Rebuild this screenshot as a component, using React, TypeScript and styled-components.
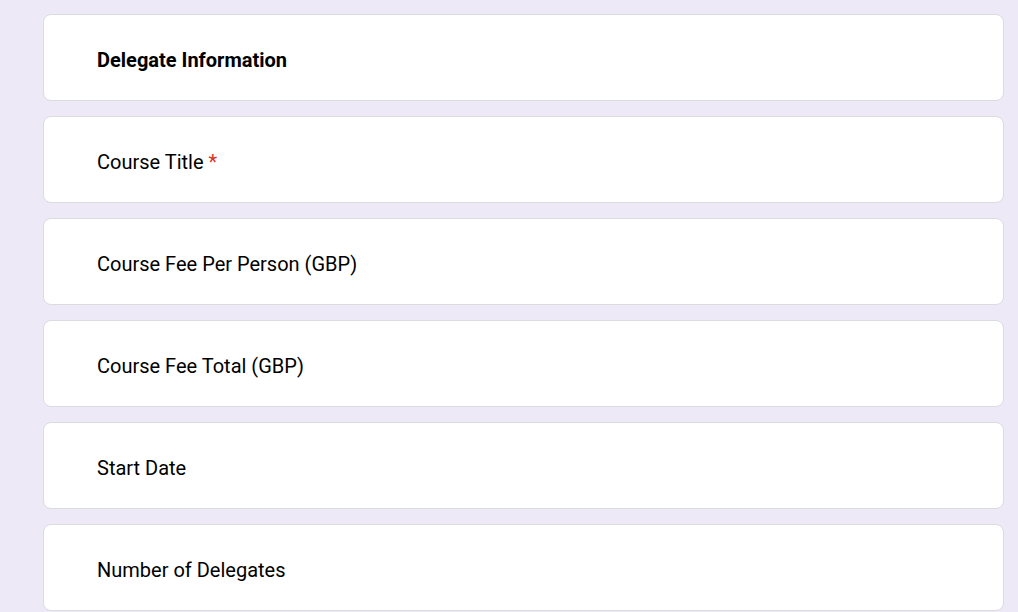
import React from "react";
import styled, { createGlobalStyle } from "styled-components";

const Global = createGlobalStyle`
  html, body { margin: 0; padding: 0; background: #ede9f7; }
  body { font-family: Roboto, "Noto Sans", Arial, sans-serif; }
`;

const Page = styled.div`
  display: flex;
  flex-direction: column;
  gap: 15px;
  padding: 14px 14px 0 43px;
`;

const Card = styled.div`
  box-sizing: border-box;
  height: 87px;
  background: #ffffff;
  border: 1px solid #dadce0;
  border-radius: 8px;
  display: flex;
  align-items: center;
  padding: 4px 24px 0 53px;
`;

const Title = styled.span<{ $bold?: boolean }>`
  font-size: 20px;
  line-height: 24px;
  color: #000;
  font-weight: ${(p) => (p.$bold ? 700 : 400)};
  letter-spacing: 0;
`;

const Req = styled.span`
  color: #d93025;
  margin-left: 5px;
`;

const items = [
  "Course Fee Per Person (GBP)",
  "Course Fee Total (GBP)",
  "Start Date",
  "Number of Delegates",
];

export default function App() {
  return (
    <>
      <Global />
      <Page>
        <Card>
          <Title $bold>Delegate Information</Title>
        </Card>
        <Card>
          <Title>
            Course Title<Req>*</Req>
          </Title>
        </Card>
        {items.map((t) => (
          <Card key={t}>
            <Title>{t}</Title>
          </Card>
        ))}
      </Page>
    </>
  );
}
